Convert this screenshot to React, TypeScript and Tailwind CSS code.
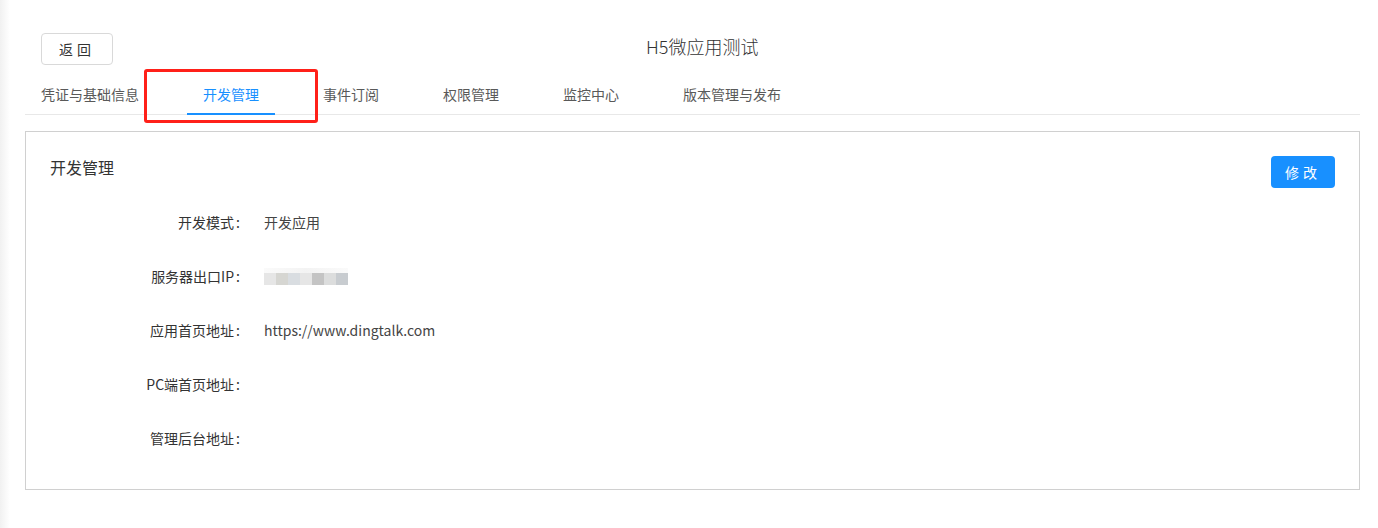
import React from "react";

const tabs = ["凭证与基础信息", "开发管理", "事件订阅", "权限管理", "监控中心", "版本管理与发布"];

const ipBlocks = ["#e6e6e6", "#d6d6d2", "#d9dde1", "#e6e6e6", "#c4c4c4", "#dcdddd", "#c8ccd0"];

function BlurredIp() {
  return (
    <div className="flex flex-col">
      <div className="h-[5px] w-[84px] bg-[linear-gradient(to_right,#fafafa,#f3f3f3,#fafafa)]" />
      <div className="flex">
        {ipBlocks.map((c, i) => (
          <div key={i} className="h-[12px] w-[12px]" style={{ backgroundColor: c }} />
        ))}
      </div>
    </div>
  );
}

function Row({ label, children }: { label: string; children?: React.ReactNode }) {
  return (
    <div className="flex h-[54px] items-center">
      <div className="w-[214px] text-right text-[14px] text-[#333]">
        {label}
        <span className="ml-[2px]">:</span>
      </div>
      <div className="ml-[24px] text-[14px] text-[#444]">{children}</div>
    </div>
  );
}

export default function App() {
  return (
    <div
      className="relative h-[528px] w-full overflow-hidden bg-[linear-gradient(to_right,#f1f1f1,#ffffff_10px)] pl-[25px] pr-[18px]"
      style={{ fontFamily: '"Noto Sans CJK SC", "Noto Sans", "Liberation Sans", sans-serif' }}
    >
      {/* header */}
      <div className="flex items-start pt-[33px]">
        <button className="ml-[16px] h-[32px] w-[72px] rounded-[4px] border border-[#d9d9d9] bg-white text-[14px] tracking-[4px] text-[#333]">
          返回
        </button>
        <div className="ml-[533px] text-[18px] font-light leading-[26px] text-[#333]">H5微应用测试</div>
      </div>

      {/* tabs */}
      <div className="mt-[8px] flex h-[42px] border-b border-[#e8e8e8]">
        {tabs.map((t, i) => (
          <div
            key={t}
            className={
              "relative mr-[32px] px-[16px] pt-[11px] text-[14px] leading-[21px] " +
              (i === 1 ? "text-[#1890ff]" : "text-[#595959]")
            }
          >
            {t}
            {i === 1 && <div className="absolute bottom-[-1px] left-0 right-0 h-[2px] bg-[#1890ff]" />}
          </div>
        ))}
      </div>

      {/* card */}
      <div className="mt-[16px] h-[359px] border border-[#d0d0d0] bg-white">
        <div className="flex items-start justify-between px-[24px] pt-[23px]">
          <div className="text-[16px] leading-[24px] text-[#333]">开发管理</div>
          <button className="mt-[1px] h-[32px] w-[64px] rounded-[4px] bg-[#1890ff] text-[14px] tracking-[4px] text-white">
            修改
          </button>
        </div>
        <div className="mt-[7px]">
          <Row label="开发模式">开发应用</Row>
          <Row label="服务器出口IP">
            <BlurredIp />
          </Row>
          <Row label="应用首页地址">https://www.dingtalk.com</Row>
          <Row label="PC端首页地址" />
          <Row label="管理后台地址" />
        </div>
      </div>

      {/* annotation highlight */}
      <div className="absolute left-[144px] top-[69px] h-[54px] w-[174px] rounded-[3px] border-[3px] border-[#ff2019]" />
    </div>
  );
}
